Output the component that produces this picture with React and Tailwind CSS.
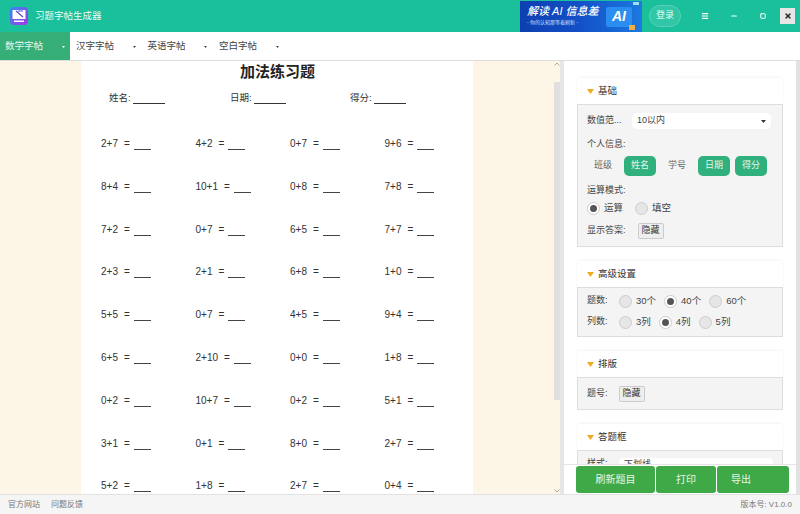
import { Menu, Minus, Square, X } from 'lucide-react';

const problems = [
  ['2+7', '4+2', '0+7', '9+6'],
  ['8+4', '10+1', '0+8', '7+8'],
  ['7+2', '0+7', '6+5', '7+7'],
  ['2+3', '2+1', '6+8', '1+0'],
  ['5+5', '0+7', '4+5', '9+4'],
  ['6+5', '2+10', '0+0', '1+8'],
  ['0+2', '10+7', '0+2', '5+1'],
  ['3+1', '0+1', '8+0', '2+7'],
  ['5+2', '1+8', '2+7', '0+4'],
];

function Tab({ label, active }) {
  return (
    <div className={`flex h-full items-center justify-between pt-px text-[9.5px] ${active ? 'w-[70px] bg-[#35ae78] pl-[5px] pr-[5px] text-[#e8f7ef]' : 'w-[71.5px] pl-[6px] pr-[6px] text-[#444]'}`}>
      <span>{label}</span>
      <svg width="3" height="2" viewBox="0 0 3 2" className={active ? 'text-white' : 'text-[#444]'}>
        <path d="M0 0h3L1.5 2z" fill="currentColor" />
      </svg>
    </div>
  );
}

function Radio({ label, checked }) {
  return (
    <div className="flex items-center gap-[4px]">
      <span className={`flex h-[13px] w-[13px] items-center justify-center rounded-full border border-[#ccc] ${checked ? 'bg-white' : 'bg-[#e6e6e6]'}`}>
        {checked && <span className="h-[7px] w-[7px] rounded-full bg-[#555]" />}
      </span>
      <span className="text-[9.5px] text-[#444]">{label}</span>
    </div>
  );
}

function Chip({ label, on }) {
  return (
    <span className={`flex h-[20px] w-[32px] items-center justify-center rounded-[5px] text-[9px] ${on ? 'bg-[#2fb07c] text-[#e8f7ef]' : 'text-[#666]'}`}>
      {label}
    </span>
  );
}

function HideButton() {
  return (
    <span className="flex h-[16px] w-[26px] items-center justify-center rounded-[2px] border border-[#ccc] bg-[#eee] text-[9px] text-[#333]">
      隐藏
    </span>
  );
}

function Section({ title, height, children }) {
  return (
    <section className="mb-[14px] ml-[13px] w-[206px]">
      <div className="flex h-[26px] items-center gap-[4px] rounded-t-[4px] bg-white pl-[10px] pt-px text-[9.5px] text-[#333] shadow-[0_-1px_3px_rgba(0,0,0,0.05)]">
        <svg width="7" height="5" viewBox="0 0 7 5">
          <path d="M0 0h7L3.5 5z" fill="#eeaa22" />
        </svg>
        <span>{title}</span>
      </div>
      <div className={`${height} border border-[#ddd] bg-[#f4f4f4] px-[9px] text-[9px] text-[#444]`}>{children}</div>
    </section>
  );
}

function RadioRow({ label, options, checked, className }) {
  return (
    <div className={`flex items-center ${className}`}>
      <span className="w-[32px] whitespace-nowrap">{label}</span>
      <div className="flex gap-[8px]">
        {options.map((o) => (
          <Radio key={o} label={o} checked={o === checked} />
        ))}
      </div>
    </div>
  );
}

function Banner() {
  return (
    <div className="relative flex h-[31px] w-[122px] flex-col justify-center overflow-hidden bg-gradient-to-r from-[#0d3fb0] via-[#1450c8] to-[#1d79e0] pl-[7px] text-white">
      <span className="text-[11px] italic leading-[13px] font-medium">解读 AI 信息差</span>
      <span className="text-[5px] leading-[9px] text-[#cfe0ff]">- 你的认知那等着刷新 -</span>
      <span className="absolute right-[10px] top-[6px] flex h-[20px] w-[26px] items-center justify-center rounded-[2px] bg-[#2b8df0] text-[14px] font-bold italic">AI</span>
      <span className="absolute right-[7px] top-[24px] h-[5px] w-[6px] bg-[#f0b040]" />
      <span className="absolute right-[3px] top-[1px] h-[3px] w-[6px] bg-[#9fe0f0]" />
    </div>
  );
}

export default function App() {
  return (
    <div className="flex h-[514px] w-[800px] flex-col overflow-hidden bg-white font-['Liberation_Sans','Noto_Sans_CJK_SC',sans-serif]">
      <header className="flex h-[32px] shrink-0 items-center bg-[#1abf9b] pl-[10px]">
        <svg width="18" height="18" viewBox="0 0 18 18" className="shrink-0">
          <defs>
            <linearGradient id="logo" x1="0" y1="0" x2="1" y2="1">
              <stop offset="0" stopColor="#2f8cf5" />
              <stop offset="1" stopColor="#b02fe8" />
            </linearGradient>
          </defs>
          <rect width="18" height="18" rx="4" fill="url(#logo)" />
          <path d="M2.5 3h13v9h-13z" fill="#fff" />
          <path d="M6 4l7 6M8 4h5" stroke="#5a4bd6" strokeWidth="1.2" fill="none" />
          <rect x="4" y="13.5" width="10" height="1.5" fill="#fff" />
        </svg>
        <span className="ml-[7px] pt-px text-[9.5px] text-[#e8fbf6]">习题字帖生成器</span>
        <div className="ml-auto flex h-full items-center">
          <Banner />
          <span className="ml-[7px] flex h-[22px] w-[32px] items-center justify-center rounded-full border border-[#5ad2b8] bg-[#30c6a6] text-[9px] text-[#e8fbf6]">登录</span>
          <Menu size={8} strokeWidth={3.5} className="ml-[20px] text-white" />
          <Minus size={8} strokeWidth={3.5} className="ml-[21px] text-white" />
          <Square size={6} strokeWidth={4} className="ml-[22px] text-white" />
          <span className="ml-[14px] mr-[5px] flex h-[16px] w-[15px] items-center justify-center bg-[#e6e6e6]">
            <X size={8} strokeWidth={4} className="text-[#222]" />
          </span>
        </div>
      </header>

      <nav className="flex h-[29px] shrink-0 items-center border-b border-[#ddd] bg-white">
        <Tab label="数学字帖" active />
        <Tab label="汉字字帖" />
        <Tab label="英语字帖" />
        <Tab label="空白字帖" />
      </nav>

      <main className="relative flex min-h-0 flex-1 bg-[#e6e6e6]">
        <div className="flex w-[560px] shrink-0 overflow-hidden bg-[#fdf6e6]">
          <div className="ml-[81px] h-full w-[392px] shrink-0 bg-white text-[#333]">
            <h1 className="mt-[1px] pl-[1px] text-center text-[15px] leading-[20px] font-bold text-[#222]">加法练习题</h1>
            <div className="mt-[9px] flex pl-[28px] text-[9.5px] leading-[14px]">
              <span className="flex w-[121px] gap-[2px]">姓名:<i className="h-[13px] w-[32px] border-b border-[#333]" /></span>
              <span className="flex w-[120px] gap-[2px]">日期:<i className="h-[13px] w-[32px] border-b border-[#333]" /></span>
              <span className="flex gap-[2px]">得分:<i className="h-[13px] w-[32px] border-b border-[#333]" /></span>
            </div>
            <div className="mt-[32px] flex flex-col gap-[28.8px] pl-[20px]">
              {problems.map((row, i) => (
                <div key={i} className="grid h-[14px] grid-cols-[94.5px_94.5px_94.5px_94.5px] text-[10px] leading-[14px]">
                  {row.map((p, j) => (
                    <span key={j} className="flex items-center">
                      <span>{p}</span>
                      <span className="ml-[6px]">=</span>
                      <i className="ml-[4px] mt-[11px] h-px w-[17px] bg-[#444]" />
                    </span>
                  ))}
                </div>
              ))}
            </div>
          </div>
          <div className="ml-auto flex h-full w-[6px] flex-col items-center">
            <svg width="6" height="4" viewBox="0 0 6 4" className="mt-[1px] text-[#aaa]">
              <path d="M0.5 3.5L3 1l2.5 2.5" stroke="currentColor" fill="none" />
            </svg>
            <div className="mt-[16px] h-[318px] w-full bg-[#e0e0e0]" />
            <svg width="6" height="4" viewBox="0 0 6 4" className="mt-auto mb-[1px] text-[#aaa]">
              <path d="M0.5 0.5L3 3l2.5-2.5" stroke="currentColor" fill="none" />
            </svg>
          </div>
        </div>

        <aside className="ml-[4px] w-[232px] overflow-hidden bg-white pt-[17px]">
          <Section title="基础" height="h-[143px]">
            <div className="flex h-[32px] items-center">
              <span className="w-[45px] whitespace-nowrap">数值范...</span>
              <div className="flex h-[16px] w-[139px] items-center justify-between rounded-[5px] bg-white px-[5px]">
                <span>10以内</span>
                <svg width="5" height="3" viewBox="0 0 5 3"><path d="M0 0h5L2.5 3z" fill="#333" /></svg>
              </div>
            </div>
            <div className="flex h-[16px] items-center">个人信息:</div>
            <div className="mt-[3px] flex gap-[5px]">
              <Chip label="班级" />
              <Chip label="姓名" on />
              <Chip label="学号" />
              <Chip label="日期" on />
              <Chip label="得分" on />
            </div>
            <div className="mt-[7px] flex h-[16px] items-center">运算模式:</div>
            <div className="mt-[2px] flex h-[14px] gap-[12px]">
              <Radio label="运算" checked />
              <Radio label="填空" />
            </div>
            <div className="mt-[8px] flex items-center gap-[12px]">
              <span>显示答案:</span>
              <HideButton />
            </div>
          </Section>
          <Section title="高级设置" height="h-[50px]">
            <RadioRow className="mt-[6px] h-[14px]" label="题数:" options={['30个', '40个', '60个']} checked="40个" />
            <RadioRow className="mt-[7px] h-[14px]" label="列数:" options={['3列', '4列', '5列']} checked="4列" />
          </Section>
          <Section title="排版" height="h-[33px]">
            <div className="flex h-full items-center gap-[11px]">
              <span>题号:</span>
              <HideButton />
            </div>
          </Section>
          <Section title="答题框" height="h-[40px]">
            <div className="mt-[7px] flex h-[12px] items-center">
              <span className="w-[32px]">样式:</span>
              <span className="h-[12px] flex-1 rounded-[4px] bg-white pl-[5px]">下划线</span>
            </div>
          </Section>
        </aside>
        <div className="w-[4px] bg-[#e2e2e2]" />

        <div className="absolute bottom-0 left-[564px] flex h-[30px] w-[232px] gap-px border-t border-[#e4e4e4] bg-white pb-px pl-[12px] pt-[1px]">
          <button className="w-[79px] rounded-[3px] bg-[#3fa948] text-[10px] text-[#e8f7e8]">刷新题目</button>
          <button className="w-[60px] rounded-[3px] bg-[#3fa948] text-[10px] text-[#e8f7e8]">打印</button>
          <button className="w-[72px] rounded-[3px] bg-[#3fa948] pr-[24px] text-[10px] text-[#e8f7e8]">导出</button>
        </div>
      </main>

      <footer className="flex h-[20px] shrink-0 items-center justify-between border-t border-[#e2e2e2] bg-[#f5f5f5] px-[8px] text-[8px] text-[#777]">
        <div className="flex gap-[11px]">
          <span>官方网站</span>
          <span>问题反馈</span>
        </div>
        <span>版本号: V1.0.0</span>
      </footer>
    </div>
  );
}
